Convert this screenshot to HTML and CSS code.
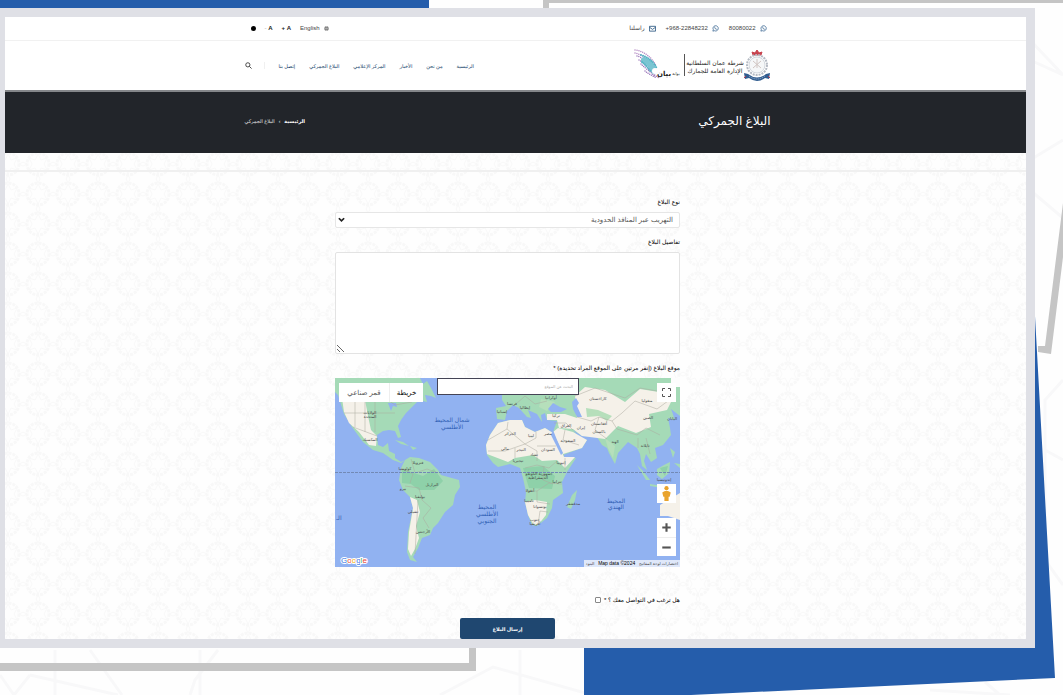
FILE: index.html
```html
<!DOCTYPE html>
<html lang="ar" dir="rtl">
<head>
<meta charset="utf-8">
<meta name="viewport" content="width=device-width, initial-scale=1">
<title>البلاغ الجمركي</title>
<link rel="stylesheet" href="styles.css">
</head>
<body>
<svg class="backdrop" viewBox="0 0 1063 695" preserveAspectRatio="none" aria-hidden="true">
  <g fill="none" stroke="#f8f8f9" stroke-width="3">
    <path d="M55 650V695M90 650L122 695M0 675L14 695L30 675M30 675L118 695M200 650V695M218 650L195 680L190 695M440 695L493 667L610 700M520 650V695M1030 40L1063 75M1030 60L1063 75M1030 160L1063 140M1030 190L1063 218M1063 380L1045 400V560L1063 585M1045 450L1063 460M985 682L1000 695M930 690L1010 695"/>
  </g>
  <path fill="#255dab" d="M0 0H429V10H0zM584 640L1034 298L1055 678L584 700z"/>
  <path fill="#c5c5c5" d="M543 0H1063V3H549V10H543zM469 645H476V671H0V663H469zM1063 203L1045 346H1038V352L1051 354L1063 257z"/>
</svg>

<div class="frame">
  <header>
    <div class="topbar">
      <div class="container topbar-row">
        <div class="contacts">
          <a href="#whatsapp"><svg class="icon" viewBox="0 0 16 16"><path d="M2 14l1-3.500A6 6 0 1 1 5.500 13zM6 5Q6 9 11 10"/></svg><bdi dir="ltr">80080022</bdi></a>
          <a href="#phone"><svg class="icon" viewBox="0 0 16 16"><path d="M2 14l1-3.500A6 6 0 1 1 5.500 13zM6 5Q6 9 11 10"/></svg><bdi dir="ltr">+968-22848232</bdi></a>
          <a href="#mail"><svg class="icon mail" viewBox="0 0 16 16"><path d="M1 3h14v11H1zM1 5l7 5 7-5"/></svg>راسلنا</a>
        </div>
        <div class="tools">
          <a class="lang" href="#en"><svg class="globe" viewBox="0 0 16 16"><circle cx="8" cy="8" r="7" fill="#555"/><path d="M1 8H15M8 1V15M8 1C3 5 3 11 8 15M8 1C13 5 13 11 8 15" fill="none" stroke="#fff"/></svg>English</a>
          <button type="button">A +</button>
          <button type="button">A <span class="faint">-</span></button>
          <button type="button" class="contrast" aria-label="تباين"></button>
        </div>
      </div>
    </div>
    <div class="nav-bar">
      <div class="container nav-row">
        <a class="brand" href="#home" aria-label="شرطة عمان السلطانية">
          <svg class="brand-art" viewBox="0 0 140 34">
            <g transform="translate(112 1)">
              <path d="M10 5L9 2L12 3L14 0L16 3L19 2L18 5z" fill="#c8434e" stroke="#c8434e"/>
              <circle cx="14" cy="15" r="10" fill="none" stroke="#b4bac3" stroke-width="2" stroke-dasharray="2 1"/>
              <circle cx="14" cy="15" r="8" fill="#f5f7f8" stroke="#d3d8de"/>
              <path d="M10 11L18 18M18 11L10 18M14 9V18" stroke="#d0c5c2" stroke-width="1"/>
              <path d="M1 23L5 24Q14 31 23 24L27 23L26 29L22 28Q14 34 6 28L2 29z" fill="#315d90"/>
              <path d="M6 26Q14 32 22 26" stroke="#a9bdd4" stroke-dasharray="1 1" fill="none"/>
              <path d="M1 28l2-2M25 26l2 2" stroke="#ba3648"/>
            </g>
            <text x="84" y="16" class="brand-text">شرطة عمان السلطانية</text>
            <text x="84" y="24" class="brand-text">الإدارة العامة للجمارك</text>
            <path d="M53.500 5V27" stroke="#555"/>
            <g fill="none" stroke-linecap="round" stroke-width="1.500">
              <path d="M4 1Q18 3 25 17M4 4Q16 7 24 20" stroke="#b58bc4" stroke-dasharray="0 2"/>
              <path d="M6 7Q14 9 22 24M8 11Q14 14 23 27M10 15Q16 21 28 29M14 22Q19 26 26 29" stroke="#9c78bb" stroke-dasharray="0 2"/>
              <path d="M13 11Q20 14 23 22" stroke="#7ac5d2" stroke-width="6"/>
              <path d="M10 6Q22 10 26 20M11 13Q16 17 20 23" stroke="#55b4c5" stroke-width="2" stroke-dasharray="0 2"/>
            </g>
            <circle cx="24" cy="22" r="3" fill="#fff"/>
            <text x="33" y="27" class="brand-sub">بيان</text>
            <text x="45" y="26" class="brand-tiny">بوابة</text>
          </svg>
        </a>
        <nav class="menu">
          <a href="#home">الرئيسية</a>
          <a href="#about">من نحن</a>
          <a href="#news">الأخبار</a>
          <a href="#media">المركز الإعلامي</a>
          <a href="#report">البلاغ الجمركي</a>
          <a href="#contact">إتصل بنا</a>
          <button type="button" class="search" aria-label="بحث"><svg viewBox="0 0 16 16"><circle cx="6.500" cy="6.500" r="4.800"/><path d="M10 10L15 15"/></svg></button>
        </nav>
      </div>
    </div>
  </header>

  <section class="hero">
    <div class="container hero-row">
      <h1>البلاغ الجمركي</h1>
      <nav class="crumbs"><a href="#home">الرئيسية</a><span>›</span><span>البلاغ الجمركي</span></nav>
    </div>
  </section>

  <main class="content">
    <svg class="pattern" aria-hidden="true">
      <defs>
        <pattern id="rosette" x="18" y="26" width="30" height="30" patternUnits="userSpaceOnUse">
          <g fill="none" stroke="#f8f8f8">
            <circle cx="15" cy="15" r="11" stroke-width="3" stroke-dasharray="3 1"/>
            <path d="M15 5L18 11L24 9L21 15L24 21L18 19L15 25L12 19L6 21L9 15L6 9L12 11z"/>
            <path d="M0 13L4 15L0 17M30 13L26 15L30 17M13 0L15 4L17 0M13 30L15 26L17 30"/>
          </g>
        </pattern>
      </defs>
      <rect width="100%" height="100%" fill="url(#rosette)"/>
    </svg>
    <div class="strip"></div>
    <form class="report">
      <label for="kind">نوع البلاغ</label>
      <div class="select-wrap">
        <select id="kind"><option>التهريب عبر المنافذ الحدودية</option></select>
        <svg class="chevron" viewBox="0 0 8 6" aria-hidden="true"><path d="M1 1L4 4L7 1"/></svg>
      </div>
      <label for="details">تفاصيل البلاغ</label>
      <textarea id="details"></textarea>
      <label for="place">موقع البلاغ (إنقر مرتين على الموقع المراد تحديدة) *</label>
      <div class="map">
        <svg class="map-art" viewBox="0 0 345 189" preserveAspectRatio="none" role="img" aria-label="خريطة العالم">
          <rect width="345" height="189" fill="#91b2f1"/>
          <g fill="#a5dab7">
            <path d="M0 0H85L88 6L92 3L96 10L101 20L96 18L90 17L92 24L84 22L77 29L71 35L66 42L63 48L66 59L63 60L60 53L54 52L48 53L42 57L43 67L48 69L53 65L54 73L60 76L60 80L66 84L70 82L66 85L58 82L48 75L38 72L28 64L17 49L9 36L3 17L0 14z"/>
            <path d="M60 62L68 64L74 68L66 66zM75 68L82 70L78 72z"/>
            <path d="M70 82L75 79L84 80L95 84L103 92L106 97L124 102L125 109L120 117L118 127L110 134L103 145L98 150L95 157L87 160L83 170L78 179L82 184L75 182L72 174L73 154L78 130L75 119L68 112L64 102L66 90z"/>
            <path d="M163 45L175 42L187 42L190 49L200 54L210 50L218 55L225 70L230 80L241 80L232 94L227 104L228 115L218 122L217 130L212 140L202 148L197 147L193 137L190 124L191 114L188 100L185 90L175 86L163 89L158 85L152 77L151 67L155 57z"/>
            <path d="M167 14L240 0H345V38L336 31L340 42L333 40L335 50L336 57L328 67L320 70L322 80L316 84L311 76L309 83L312 92L307 88L305 76L302 70L293 64L283 75L280 86L274 75L272 70L267 67L262 59L247 58L238 52L243 58L252 62L247 70L228 77L223 65L218 54L222 43L212 42L210 35L206 37L207 44L202 36L193 32L196 40L192 39L184 30L178 27L172 33L170 42L162 41L161 30L171 28L167 22z"/>
            <path d="M237 117L242 112L240 122L236 131L232 129zM302 87L308 93L315 102L311 102zM322 91L329 87L335 84L334 95L327 101L322 97zM315 106L334 109V111L315 108zM335 70L340 74L338 80zM339 85L345 86V90z"/>
          </g>
          <g fill="#f5f1e9">
            <path d="M7 20L17 24L30 22L33 38L36 52L42 58L41 68L34 67L24 54L14 45L9 34z"/>
            <path d="M75 119L82 122L85 134L81 148L84 160L80 171L76 178L73 171L74 154L78 130z"/>
            <path d="M163 45L175 42L187 42L190 49L200 54L210 50L218 55L225 70L229 79H240L230 90L222 82L207 83L198 77L180 80L173 84L152 76L151 67L155 57z"/>
            <path d="M190 124L200 122L212 124L211 137L203 147L198 146L193 137zM218 54L223 50L238 54L252 62L247 70L228 76z"/>
            <path d="M212 36L230 36L242 40L240 18L250 9L270 12L290 24L305 11L330 15L338 20L332 32L314 36L316 49L301 55L283 48L270 61L247 58L238 51L224 50L222 42L212 42z"/>
            <path d="M325 127L345 115V142L333 138L325 138z"/>
          </g>
          <path fill="#b6dfbb" d="M251 30L263 32L277 38L272 43L264 38L252 39zM270 60L280 68L278 80L273 70zM206 21L220 24L212 33L204 29z"/>
          <path fill="#78c89b" opacity=".5" d="M67 91L88 98L99 91L108 103L99 112L84 112L76 106L67 105zM188 90L208 88L220 98L217 111L194 110zM325 90L333 88L330 98z"/>
          <path fill="#91b2f1" d="M213 31L218 25L225 29L232 31L226 34L216 34zM237 24L241 20L244 25L242 28L247 39L242 39L238 31zM53 25L61 25L62 29L58 28L56 33zM218 52L222 62L228 75L226 77L216 57z"/>
          <g fill="none" stroke="#aaa99f" stroke-width=".5">
            <path d="M8 22H53L60 27L77 24M18 49L42 58M20 23V49M30 23V54M40 24V54M9 35H60M76 81L80 95L92 91L103 95M66 90L78 96L75 105M70 108L84 110L87 122L96 130L88 140L94 150M83 122L80 176"/>
            <path d="M173 44L172 51L153 62M172 51L190 66L201 60V54M153 73H170L190 66L202 73V83M202 68H221M180 80V70M190 90L202 87L214 90L222 83M190 113L202 113L214 105L227 106M202 113V124L215 126M203 147L205 133L213 134M209 88L208 102L218 106M230 80V92"/>
            <path d="M219 45L231 45L238 52M230 52L228 62L244 67M242 39L256 43L264 39L277 43L287 35L300 23L322 31L333 23M264 39L260 52L272 61M277 43L282 51L302 57L311 50L325 57M240 18L260 10L290 20L305 10L340 16M181 26L190 18L200 26L212 23M303 70V60M311 60L315 76"/>
          </g>
          <path d="M0 94.500H345" stroke="#7289b5" stroke-dasharray="3 1" fill="none"/>
          <g class="sea">
            <text x="117" y="44">شمال المحيط</text><text x="117" y="51">الأطلسي</text>
            <text x="152" y="131">المحيط</text><text x="152" y="138">الأطلسي</text><text x="152" y="145">الجنوبي</text>
            <text x="281" y="125">المحيط</text><text x="281" y="131">الهندي</text><text x="4" y="142">الـ</text>
          </g>
          <g class="land">
            <text x="35" y="36">الولايات</text><text x="35" y="40">المتحدة</text><text x="35" y="63">المكسيك</text>
            <text x="83" y="86">فنزويلا</text><text x="70" y="92">كولومبيا</text><text x="97" y="108">البرازيل</text><text x="68" y="112">بيرو</text><text x="85" y="120">بوليفيا</text><text x="78" y="135">تشيلي</text><text x="88" y="155">الأرجنتين</text>
            <text x="167" y="35">إسبانيا</text><text x="177" y="27">فرنسا</text><text x="190" y="31">إيطاليا</text><text x="221" y="39">تركيا</text><text x="216" y="21">أوكرانيا</text>
            <text x="175" y="57">الجزائر</text><text x="196" y="59">ليبيا</text><text x="213" y="57">مصر</text><text x="170" y="72">مالي</text><text x="186" y="73">النيجر</text><text x="213" y="73">السودان</text><text x="199" y="78">تشاد</text><text x="226" y="86">إثيوبيا</text><text x="183" y="84">نيجيريا</text>
            <text x="204" y="97">جمهورية الكونغو</text><text x="203" y="101">الديمقراطية</text><text x="222" y="105">تنزانيا</text><text x="195" y="114">أنغولا</text><text x="194" y="124">ناميبيا</text><text x="205" y="130">بوتسوانا</text><text x="200" y="143">جنوب</text><text x="200" y="147">أفريقيا</text><text x="238" y="127">مدغشقر</text>
            <text x="231" y="49">العراق</text><text x="233" y="64">السعودية</text><text x="246" y="51">إيران</text><text x="263" y="22">كازاخستان</text><text x="264" y="47">أفغانستان</text><text x="264" y="55">باكستان</text><text x="280" y="65">الهند</text><text x="312" y="24">منغوليا</text><text x="313" y="41">الصين</text><text x="310" y="69">تايلاند</text><text x="329" y="103">إندونيسيا</text><text x="337" y="42">اليابان</text>
          </g>
          <path d="M336 0H345V9H336z" fill="#fdfdfd"/>
        </svg>
        <div class="map-types">
          <button type="button" class="on">خريطة</button><button type="button">قمر صناعي</button>
        </div>
        <input class="place" id="place" type="text" placeholder="البحث عن الموقع">
        <button type="button" class="map-btn full" aria-label="ملء الشاشة"><svg viewBox="0 0 19 19"><path d="M5.500 8V5.500H8M11 5.500H13.500V8M13.500 11V13.500H11M8 13.500H5.500V11"/></svg></button>
        <div class="map-side">
          <button type="button" class="map-btn" aria-label="التجوّل الافتراضي"><svg class="man" viewBox="0 0 18 18"><circle cx="9" cy="4" r="2"/><path d="M5 8Q9 5 13 8L12 12H11L11 16H7L7 12H6z"/></svg></button>
          <div class="zoom">
            <button type="button" class="map-btn" aria-label="تكبير"><svg viewBox="0 0 18 18"><path d="M5 9H13M9 5V13"/></svg></button>
            <button type="button" class="map-btn" aria-label="تصغير"><svg viewBox="0 0 18 18"><path d="M5 9H13"/></svg></button>
          </div>
        </div>
        <div class="google" dir="ltr"><span class="gb">G</span><span class="gr">o</span><span class="gy">o</span><span class="gb">g</span><span class="gg">l</span><span class="gr">e</span></div>
        <div class="credits"><a href="#keys">اختصارات لوحة المفاتيح</a><span dir="ltr" class="data">Map data ©2024</span><a href="#terms">البنود</a></div>
      </div>
      <div class="consent">
        <label for="reply">هل ترغب في التواصل معك ؟ *</label>
        <input id="reply" type="checkbox">
      </div>
      <button type="submit" class="send">إرسال البلاغ</button>
    </form>
  </main>
</div>
</body>
</html>
```
FILE: styles.css
```css
* { box-sizing: border-box; }

body {
  position: relative;
  min-height: 100vh;
  margin: 0;
  padding: 8px 28px 46px 0;
  background: #fefefe;
  color: #444;
  font: 6px/10px "Liberation Sans", "DejaVu Sans", sans-serif;
}

a { color: inherit; text-decoration: none; }
button, input, select, textarea { margin: 0; font: inherit; color: inherit; }
button { padding: 0; border: 0; background: none; }
svg { display: block; }

.backdrop {
  position: absolute;
  inset: 0;
  width: 100%;
  height: 100%;
}

.frame {
  position: relative;
  border: 9px solid #dfe0e6;
  border-left-width: 5px;
  background: #fff;
}

.container {
  width: 526px;
  max-width: 100%;
  margin: 0 auto;
}

.topbar, .nav-bar, .hero { padding-right: 16px; }
.topbar { border-bottom: 1px solid #f1f1f1; }
.topbar-row {
  display: flex;
  align-items: center;
  justify-content: space-between;
  height: 23px;
  padding-bottom: 1px;
}
.contacts, .tools { display: flex; align-items: center; }
.contacts { gap: 10px; padding-right: 4px; }
.contacts a, .lang { display: flex; align-items: center; gap: 4px; }
.tools { gap: 9px; padding-left: 6px; }
.tools button { color: #222; font-weight: bold; }
.tools .faint { color: #ccc; }
.icon { width: 7px; height: 7px; fill: none; stroke: #4a749b; stroke-width: 2; }
.mail { stroke: #315d86; }
.globe { width: 5px; height: 5px; }
.tools .contrast { width: 5px; height: 5px; border-radius: 50%; background: #000; }

.nav-row {
  display: flex;
  align-items: center;
  justify-content: space-between;
  height: 49px;
}
.brand-art { width: 140px; height: 34px; overflow: visible; }
.brand-text, .brand-sub, .brand-tiny { fill: #222; font-family: "DejaVu Sans", sans-serif; text-anchor: middle; }
.brand-text { font-size: 6px; }
.brand-sub { font-size: 7px; font-weight: bold; }
.brand-tiny { font-size: 4px; }
.menu {
  display: flex;
  align-items: center;
  gap: 14px;
  color: #0f3b66;
  font-size: 5px;
}
.search { padding-right: 12px; border-right: 1px solid #f0f0f0; }
.search svg { width: 7px; height: 7px; fill: none; stroke: #333; stroke-width: 2; }

.hero {
  border-top: 2px solid #85878a;
  background: #22252a;
  color: #fff;
}
.hero-row {
  display: flex;
  align-items: center;
  justify-content: space-between;
  height: 61px;
  padding-bottom: 3px;
}
h1 { margin: 0; font-size: 12px; line-height: 20px; font-weight: normal; }
.crumbs { display: flex; gap: 4px; color: #e4e5e6; font-size: 5px; }
.crumbs a { color: #fff; font-weight: bold; }

.content { position: relative; background: #fefefe; }
.pattern { position: absolute; inset: 0; width: 100%; height: 100%; }
.strip { position: relative; height: 19px; border-bottom: 2px solid #f0f0f0; }

.report {
  position: relative;
  display: flex;
  flex-direction: column;
  width: 361px;
  max-width: 100%;
  margin: 0 auto;
  padding: 25px 16px 0 0;
}
.report label { color: #000; }
.report > label { margin-bottom: 5px; }

.select-wrap { position: relative; margin-bottom: 9px; }
select {
  display: block;
  width: 100%;
  height: 16px;
  padding: 0 6px;
  border: 1px solid #e6e6e6;
  border-radius: 2px;
  appearance: none;
  background: #fff;
  color: #555;
  font-size: 7px;
}
.chevron {
  position: absolute;
  left: 3px;
  top: 5px;
  width: 7px;
  height: 6px;
  fill: none;
  stroke: #222;
  stroke-width: 2;
}
textarea {
  height: 102px;
  margin-bottom: 9px;
  border: 1px solid #e3e3e3;
  border-radius: 2px;
  background: #fff;
  resize: vertical;
}

.map { position: relative; height: 189px; overflow: hidden; }
.map-art { width: 100%; height: 100%; }
.sea text, .land text { font-family: "DejaVu Sans", sans-serif; text-anchor: middle; }
.sea text { fill: #2f5eb4; font-size: 6px; }
.land text { fill: #444; font-size: 4px; }

.map-types {
  position: absolute;
  left: 4px;
  top: 5px;
  display: flex;
  height: 19px;
  background: #fff;
  color: #555;
  font-size: 7px;
}
.map-types button { width: 50px; }
.map-types .on { width: 34px; border-left: 1px solid #eee; color: #000; }

.place {
  position: absolute;
  left: 102px;
  top: 0;
  width: 142px;
  height: 17px;
  padding: 0 5px;
  border: 1px solid #445;
  background: #fff;
  font-size: 4px;
}
.place::placeholder { color: #aaa; }
.map-btn { display: block; width: 19px; height: 19px; background: #fff; }
.map-btn svg { width: 19px; height: 19px; fill: none; stroke: #555; stroke-width: 2; }
.map-btn.full { position: absolute; right: 4px; top: 5px; }
.map-btn.full svg { stroke-width: 1; }
.map-side {
  position: absolute;
  right: 4px;
  bottom: 11px;
  display: flex;
  flex-direction: column;
  gap: 15px;
}
.map-btn .man { fill: #e9a42e; stroke: none; }
.zoom .map-btn + .map-btn { border-top: 1px solid #eee; }
.google {
  position: absolute;
  left: 6px;
  bottom: 1px;
  font-size: 8px;
  -webkit-text-stroke: 2px #fff;
  paint-order: stroke fill;
}
.gb { color: #2f6fe4; }
.gr { color: #ea4335; }
.gy { color: #f2ab00; }
.gg { color: #34a853; }
.credits {
  position: absolute;
  right: 0;
  bottom: 0;
  display: flex;
  justify-content: space-around;
  width: 96px;
  height: 7px;
  background: #dfe8fa;
  font-size: 4px;
  line-height: 7px;
  white-space: nowrap;
}
.credits .data { color: #000; font-size: 5px; }

.consent { display: flex; align-items: center; gap: 3px; margin: 28px 0 13px; }
.consent input {
  width: 6px;
  height: 6px;
  border: 1px solid #888;
  border-radius: 1px;
  appearance: none;
  background: #fff;
}
.send {
  align-self: center;
  width: 95px;
  height: 21px;
  border-radius: 2px;
  background: #1f4770;
  color: #fff;
  font-size: 5px;
  font-weight: bold;
}
```
